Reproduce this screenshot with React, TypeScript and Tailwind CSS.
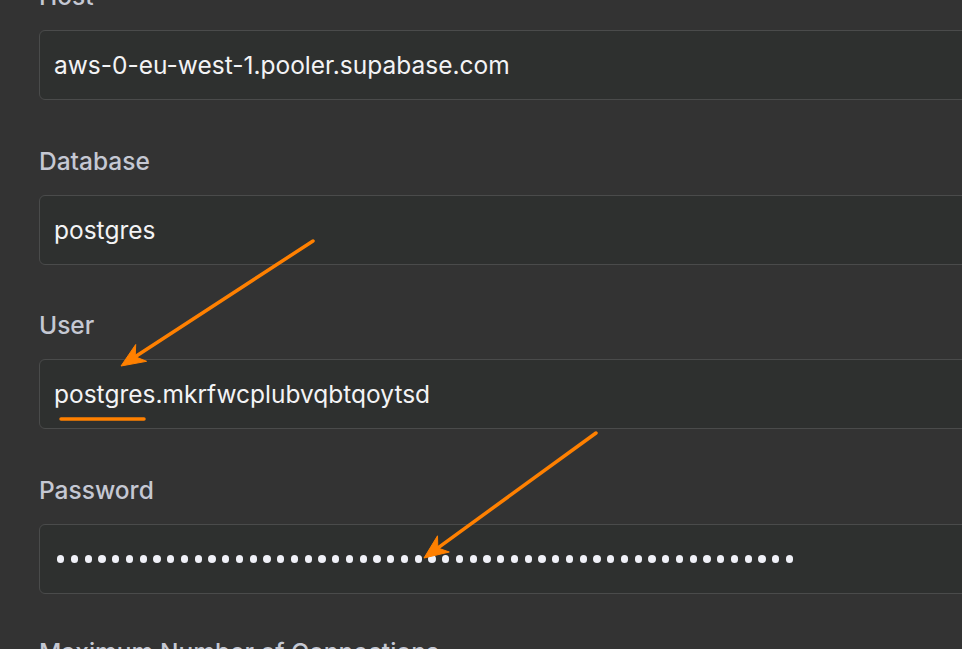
const font = { fontFamily: 'Inter, "Noto Sans", sans-serif' };

function Label({ text }: { text: string }) {
    return <div className="text-[24.5px] leading-[32px] font-medium text-[#c5c8d3] mb-[18px] whitespace-nowrap">{text}</div>;
}

function Field({ label, children }: { label: string; children: React.ReactNode }) {
    return (
        <div className="flex flex-col">
            <Label text={label} />
            <div className="h-[70px] w-[980px] rounded-[6px] border border-[#4a4b4b] bg-[#2e302f] flex items-center pl-[14px]">
                {children}
            </div>
        </div>
    );
}

function Value({ text }: { text: string }) {
    return <span className="text-[24.5px] leading-[32px] text-[#f3f3f5] whitespace-nowrap">{text}</span>;
}

function arrowHead(tx: number, ty: number, fx: number, fy: number) {
    const dx = tx - fx;
    const dy = ty - fy;
    const len = Math.hypot(dx, dy);
    const ux = dx / len;
    const uy = dy / len;
    const nx = -uy;
    const ny = ux;
    const L = 24;
    const W = 10;
    const notch = 17;
    const p = (x: number, y: number) => `${x.toFixed(1)},${y.toFixed(1)}`;
    return [
        p(tx, ty),
        p(tx - L * ux + W * nx, ty - L * uy + W * ny),
        p(tx - notch * ux, ty - notch * uy),
        p(tx - L * ux - W * nx, ty - L * uy - W * ny),
    ].join(' ');
}

function Arrow({ fx, fy, tx, ty }: { fx: number; fy: number; tx: number; ty: number }) {
    const len = Math.hypot(tx - fx, ty - fy);
    const ex = tx - ((tx - fx) / len) * 16;
    const ey = ty - ((ty - fy) / len) * 16;
    return (
        <g>
            <line x1={fx} y1={fy} x2={ex} y2={ey} stroke="#ff8000" strokeWidth={3.5} strokeLinecap="round" />
            <polygon points={arrowHead(tx, ty, fx, fy)} fill="#ff8000" strokeLinejoin="round" stroke="#ff8000" strokeWidth={1} />
        </g>
    );
}

export default function App() {
    const dots = Array.from({ length: 54 });

    return (
        <div className="relative w-[962px] h-[649px] overflow-hidden bg-[#333333]" style={font}>
            <div className="flex flex-col gap-[44.7px] pl-[39px] -mt-[20px]">
                <Field label="Host">
                    <Value text="aws-0-eu-west-1.pooler.supabase.com" />
                </Field>
                <Field label="Database">
                    <Value text="postgres" />
                </Field>
                <Field label="User">
                    <Value text="postgres.mkrfwcplubvqbtqoytsd" />
                </Field>
                <Field label="Password">
                    <div className="flex items-center gap-[6.5px] pl-[3px]">
                        {dots.map((_, i) => (
                            <span key={i} className="block w-[7.25px] h-[7.25px] rounded-full bg-[#f0f1f8]" />
                        ))}
                    </div>
                </Field>
                <div className="-mt-[3px]">
                    <Label text="Maximum Number of Connections" />
                </div>
            </div>

            <svg className="absolute inset-0 pointer-events-none" width="962" height="649" viewBox="0 0 962 649">
                <Arrow fx={313} fy={241} tx={121} ty={366} />
                <Arrow fx={596} fy={433} tx={424} ty={558} />
                <line x1={61} y1={419} x2={144} y2={419} stroke="#ff8000" strokeWidth={3.5} strokeLinecap="round" />
            </svg>
        </div>
    );
}
